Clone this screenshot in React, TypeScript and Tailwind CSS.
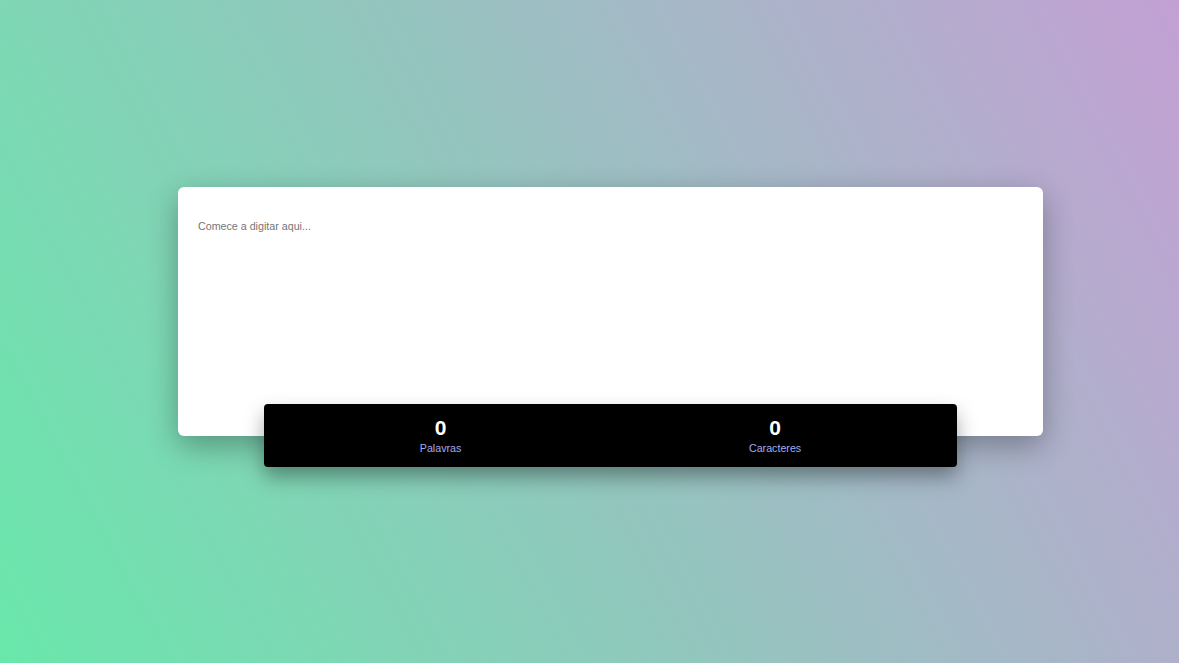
import { useState } from 'react'

export default function App() {
  const [text, setText] = useState('')

  const words = text.trim() ? text.trim().split(/\s+/).length : 0
  const chars = text.length

  return (
    <div className="min-h-screen w-full bg-[linear-gradient(62deg,#69e7ab,#c3a0d4)] font-['Liberation_Sans',Arial,sans-serif] pl-[42px] pt-[187px]">
      <div className="mx-auto flex w-[865px] flex-col items-center">
        <div className="h-[249px] w-full rounded-md bg-white shadow-[0_10px_30px_rgba(0,0,0,0.3)]">
          <textarea
            value={text}
            onChange={(e) => setText(e.target.value)}
            placeholder="Comece a digitar aqui..."
            className="h-full w-full resize-none bg-transparent px-5 pt-[31px] text-[10.7px] leading-4 text-gray-800 outline-none placeholder:text-[#757575]"
          />
        </div>
        <div className="relative -mt-[32px] flex h-[63px] w-[693px] items-center justify-around rounded bg-black px-3 shadow-[0_10px_20px_rgba(0,0,0,0.35)]">
          <div className="flex flex-col items-center">
            <span className="text-[21px] font-bold leading-6 text-white">{words}</span>
            <span className="text-[10.7px] leading-4 text-[#a3acf0]">Palavras</span>
          </div>
          <div className="flex flex-col items-center">
            <span className="text-[21px] font-bold leading-6 text-white">{chars}</span>
            <span className="text-[10.7px] leading-4 text-[#a3acf0]">Caracteres</span>
          </div>
        </div>
      </div>
    </div>
  )
}
